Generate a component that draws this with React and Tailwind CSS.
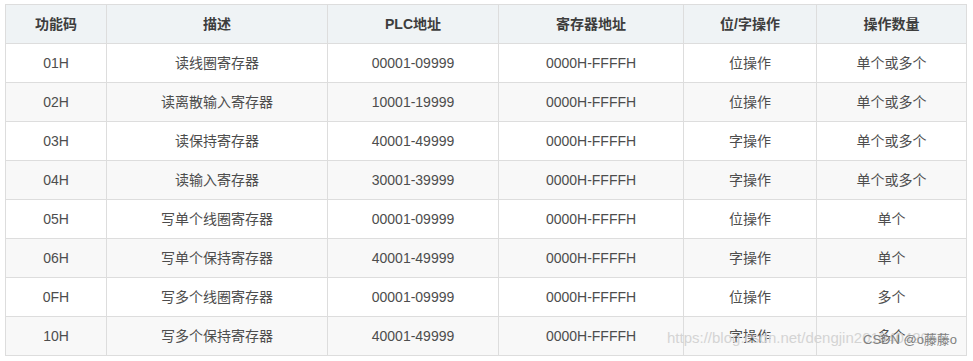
const rows = [
  ["01H", "读线圈寄存器", "00001-09999", "0000H-FFFFH", "位操作", "单个或多个"],
  ["02H", "读离散输入寄存器", "10001-19999", "0000H-FFFFH", "位操作", "单个或多个"],
  ["03H", "读保持寄存器", "40001-49999", "0000H-FFFFH", "字操作", "单个或多个"],
  ["04H", "读输入寄存器", "30001-39999", "0000H-FFFFH", "字操作", "单个或多个"],
  ["05H", "写单个线圈寄存器", "00001-09999", "0000H-FFFFH", "位操作", "单个"],
  ["06H", "写单个保持寄存器", "40001-49999", "0000H-FFFFH", "字操作", "单个"],
  ["0FH", "写多个线圈寄存器", "00001-09999", "0000H-FFFFH", "位操作", "多个"],
  ["10H", "写多个保持寄存器", "40001-49999", "0000H-FFFFH", "字操作", "多个"],
];

const headers = ["功能码", "描述", "PLC地址", "寄存器地址", "位/字操作", "操作数量"];
const widths = ["w-[101px]", "w-[221px]", "w-[171px]", "w-[185px]", "w-[133px]", "w-[150px]"];

const cellClass = "border border-[#dddddd] h-[39px] p-0 text-center align-middle";

export default function App() {
  return (
    <div
      className="relative w-[973px] h-[361px] bg-white pl-[5px] pt-[4px] text-[14px] text-[#4d4d4d]"
      style={{ fontFamily: '"Liberation Sans", "Noto Sans CJK SC", sans-serif' }}
    >
      <table className="table-fixed border-collapse w-[962px]">
        <colgroup>
          {widths.map((w, i) => (
            <col key={i} className={w} />
          ))}
        </colgroup>
        <thead>
          <tr className="bg-[#eff3f5]">
            {headers.map((h) => (
              <th key={h} className={cellClass + " font-bold text-[#3d3d3d]"}>
                {h}
              </th>
            ))}
          </tr>
        </thead>
        <tbody>
          {rows.map((r, i) => (
            <tr key={r[0]} className={i % 2 === 1 ? "bg-[#f8f8f8]" : "bg-white"}>
              {r.map((c, j) => (
                <td key={j} className={cellClass}>
                  {c}
                </td>
              ))}
            </tr>
          ))}
        </tbody>
      </table>

      {/* watermark */}
      <div className="absolute left-[667px] top-[327px] text-[15px] text-[#d4d4d4] whitespace-nowrap pointer-events-none">
        https://blog.csdn.net/dengjin20104042056
      </div>
      <div className="absolute left-[863px] top-[330px] text-[13px] font-normal text-[#808080] whitespace-nowrap pointer-events-none">
        CSDN @o藤藤o
      </div>
    </div>
  );
}
